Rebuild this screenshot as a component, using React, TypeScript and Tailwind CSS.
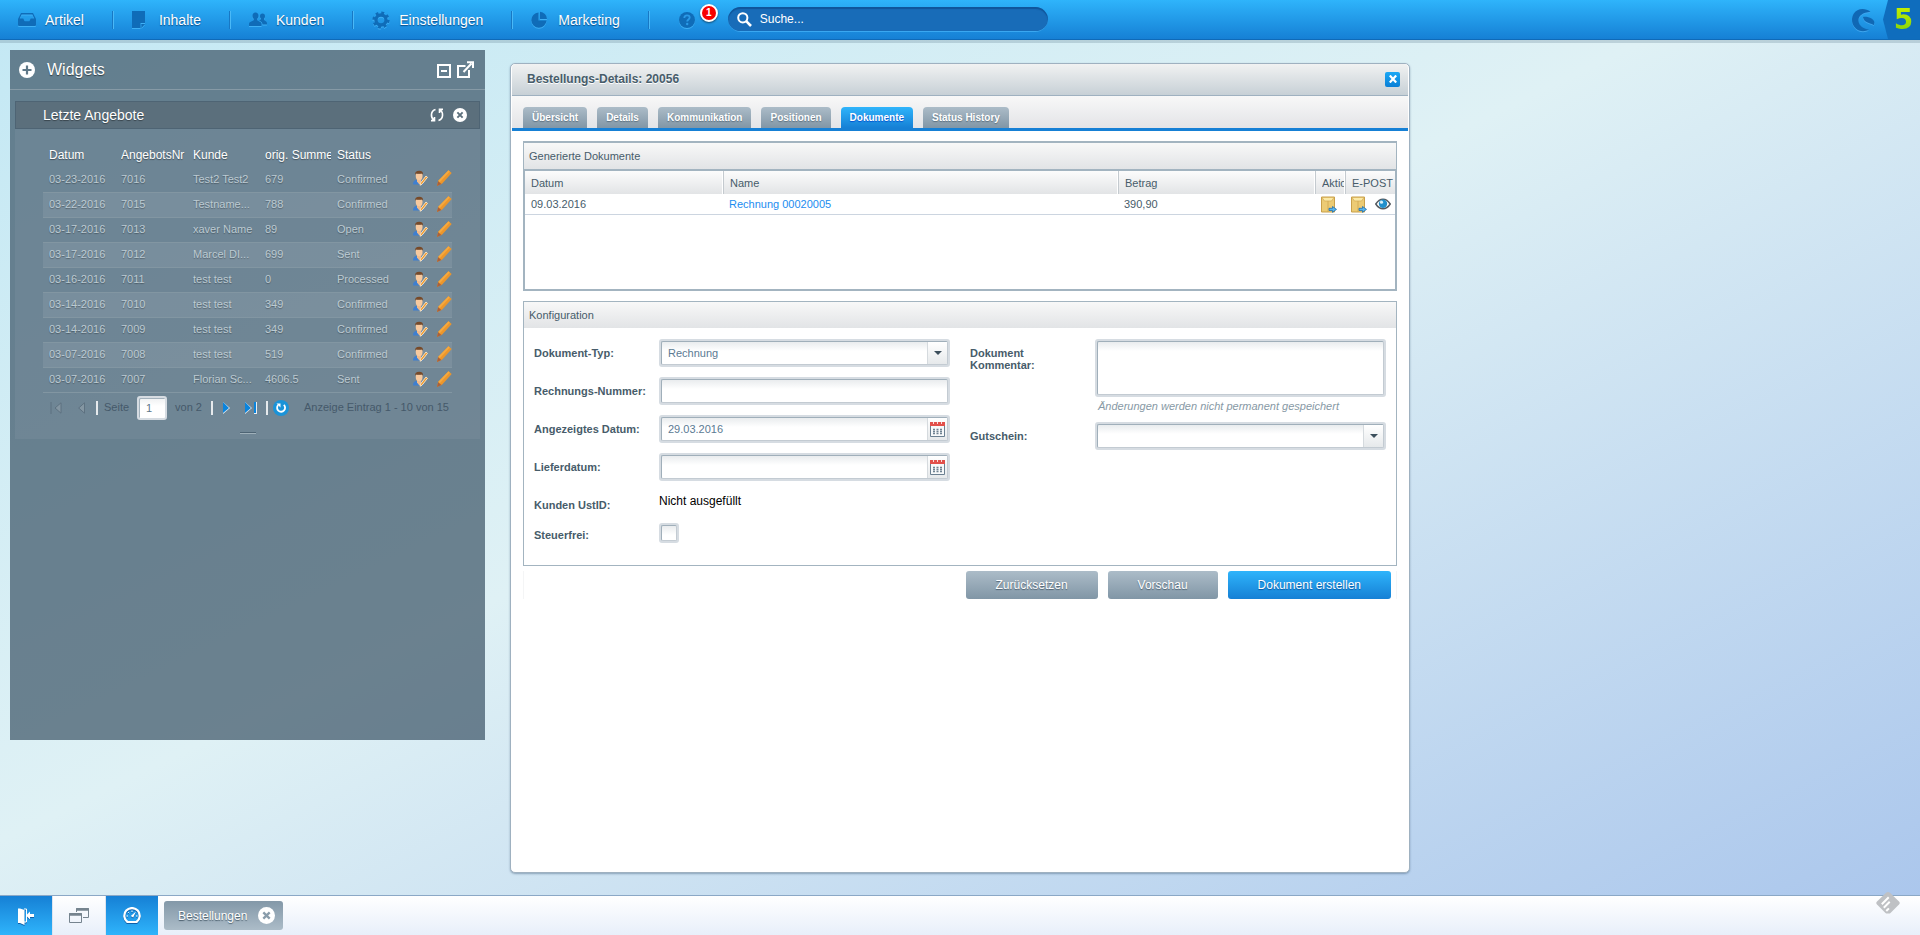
import React from "react";

type Offer = [string, string, string, string, string];

const offers: Offer[] = [
  ["03-23-2016", "7016", "Test2 Test2", "679", "Confirmed"],
  ["03-22-2016", "7015", "Testname...", "788", "Confirmed"],
  ["03-17-2016", "7013", "xaver Name", "89", "Open"],
  ["03-17-2016", "7012", "Marcel DI...", "699", "Sent"],
  ["03-16-2016", "7011", "test test", "0", "Processed"],
  ["03-14-2016", "7010", "test test", "349", "Confirmed"],
  ["03-14-2016", "7009", "test test", "349", "Confirmed"],
  ["03-07-2016", "7008", "test test", "519", "Confirmed"],
  ["03-07-2016", "7007", "Florian Sc...", "4606.5", "Sent"],
];

/* ---------- icons ---------- */

const navIcon = "h-[18px] w-[18px] shrink-0 text-[#0f6cb8] drop-shadow-[0_1px_0_#3fb0f5]";

const TrayIcon = () => (
  <svg viewBox="0 0 18 18" className={navIcon} fill="currentColor">
    <path d="M3 2h12l3 6v6a1 1 0 0 1-1 1H1a1 1 0 0 1-1-1V8zM3.6 3.4 1.8 7.6h3.4c.6 0 .7 2.6 1.6 2.6h4.4c.9 0 1-2.6 1.6-2.6h3.4l-1.8-4.2z" />
  </svg>
);
const NoteIcon = () => (
  <svg viewBox="0 0 18 18" className={navIcon} fill="currentColor">
    <path d="M0 0h13v12H8.500v5H0zM9.500 13H13l-3.500 4z" />
  </svg>
);
const PeopleIcon = () => (
  <svg viewBox="0 0 18 18" className={navIcon} fill="currentColor">
    <path d="M6.500 1.500c1.900 0 3 1.300 3 3.200 0 1.300-.5 2.500-1.300 3.100v1.500c1 .9 4.300 1.600 4.300 3.700v2H0v-2c0-2.100 3.600-2.800 4.700-3.700V7.800C3.900 7.200 3.500 6 3.500 4.700c0-1.900 1.100-3.200 3-3.200z" />
    <path d="M13.500 2.500c1.600 0 2.500 1.100 2.500 2.700 0 1-.4 2-1 2.500V9c.7.800 3 1.400 3 3v1.500h-4.400c-.1-2-2-3.100-3.400-4 .9-.3 1.800-.9 1.800-1.800-.6-.5-1-1.500-1-2.500 0-1.600.9-2.700 2.500-2.700z" />
  </svg>
);
const GearIcon = () => (
  <svg viewBox="0 0 18 18" className={navIcon} fill="none" stroke="currentColor">
    <circle cx="9" cy="9" r="5" strokeWidth="3.400" />
    <circle cx="9" cy="9" r="7.300" strokeWidth="2.600" strokeDasharray="2.87 2.87" />
  </svg>
);
const PieIcon = () => (
  <svg viewBox="0 0 18 18" className={navIcon} fill="currentColor">
    <path d="M7.500 1.500v8h8a7.600 7.600 0 1 1-8-8z" />
    <path d="M9 .8A7.500 7.500 0 0 1 16 8H9z" />
  </svg>
);
const HelpIcon = () => (
  <svg viewBox="0 0 18 18" className={navIcon}>
    <circle cx="9" cy="9" r="8" fill="currentColor" />
    <path d="M6.300 7c0-1.700 1.100-2.700 2.700-2.700s2.700.9 2.700 2.300c0 1.900-2.500 2-2.500 4" fill="none" stroke="#2a9ae8" strokeWidth="1.800" />
    <circle cx="9.200" cy="13" r="1.200" fill="#2a9ae8" />
  </svg>
);
const SwirlIcon = () => (
  <svg viewBox="0 0 24 24" className="h-6 w-6 text-[#1068b4] drop-shadow-[0_1px_0_#3fa6ee]" fill="currentColor">
    <path d="M19.500 3.800C14-.5 6 .2 2.500 6-1 12.500 2 20 8 22.500c3.500 1.300 7 .8 10-1C12 21 8 17.500 7.500 13 7 8.500 11 4.500 19.500 3.800z" />
    <path d="M12 9c3-.8 10.500 1 11.300 5 .1 1.300-.2 2.500-.6 3.200C20 14.500 13 15.500 12 9z" />
  </svg>
);
const CustomerIcon = () => (
  <svg viewBox="0 0 16 16" className="h-4 w-4">
    <path d="M1 14.500c0-3 1.300-4.500 3.500-4.500h4c2 0 3 1.500 3 4.500z" fill="#3f7fd0" />
    <path d="M5 8.500h4.200v3L8.500 14H7l-2-2.500z" fill="#f0ba8a" />
    <path d="M3.800 3.500h6.700v3.200c0 2.300-1.500 3.600-3.300 3.600S3.800 9 3.800 6.700z" fill="#f8c99e" />
    <path d="M3 5C2.800 2 4.500.8 7.200.8s4.200 1.300 3.900 4.200l-1-1.500c-2 .4-4.200.4-6.200 0z" fill="#774a29" />
    <path d="m14 6 1.500 1.300-5.500 7-2 .9.500-2.200z" fill="#f09a2c" stroke="#fbe9cf" strokeWidth=".9" />
  </svg>
);
const PencilIcon = () => (
  <svg viewBox="0 0 16 16" className="h-4 w-4">
    <path d="M12.500.3 15.700 3 6 13.800 1 16l1.300-5.300z" fill="#ec962b" />
    <path d="m12.500.3 1.300 1.100-10 10.800-1.500-1.500z" fill="#f5a93f" />
    <path d="M2.100 11.300 5.500 14 1 16z" fill="#a9603c" />
  </svg>
);
const EnvelopeIcon = () => (
  <svg viewBox="0 0 16 17" className="h-[17px] w-4">
    <path d="M.5 1h13v15H.5z" fill="#eccb74" stroke="#c9a04a" />
    <path d="M1 1.500h12L10.500 5h-7z" fill="#fbe9a5" stroke="#d3ab55" strokeWidth=".7" />
    <path d="M7 5v11" stroke="#cfa651" strokeWidth=".8" />
    <path d="M8 12.300h3.500v-1.800l4 2.900-4 2.900v-1.800H8z" fill="#58b6ee" stroke="#1c6fb0" strokeWidth=".8" />
  </svg>
);
const EyeIcon = () => (
  <svg viewBox="0 0 16 12" className="h-3 w-4">
    <path d="M.8 6C3 2.500 5.300 1.200 8 1.200S13 2.500 15.200 6C13 9.500 10.700 10.800 8 10.800S3 9.500.8 6z" fill="#fff" stroke="#555b60" strokeWidth="1.500" />
    <circle cx="8" cy="5.700" r="4.200" fill="#2090cc" />
    <circle cx="6.500" cy="4.200" r="1.600" fill="#d6f0fb" />
  </svg>
);
const CalendarIcon = () => (
  <svg viewBox="0 0 15 15" className="h-[15px] w-[15px]">
    <path d="M0 0h15v4H0z" fill="#e2504b" />
    <path d="M3.500 0v2M7.500 0v2M11.500 0v2" stroke="#fbdcdb" />
    <path d="M.5 4v10.500h14V4" fill="#f7f9fa" stroke="#6b8091" />
    <path d="M3 7.500h9M3 9.500h9M3 11.500h9" stroke="#6f8291" strokeWidth="1.300" strokeDasharray="2 1.500" />
  </svg>
);
const CircleX = ({ className, cross }: { className: string; cross: string }) => (
  <svg viewBox="0 0 16 16" className={className}>
    <circle cx="8" cy="8" r="8" fill="#fff" />
    <path d="m5 5 6 6M11 5l-6 6" stroke={cross} strokeWidth="2.200" />
  </svg>
);

/* ---------- top bar ---------- */

const menu = [
  { label: "Artikel", icon: <TrayIcon /> },
  { label: "Inhalte", icon: <NoteIcon /> },
  { label: "Kunden", icon: <PeopleIcon /> },
  { label: "Einstellungen", icon: <GearIcon /> },
  { label: "Marketing", icon: <PieIcon /> },
];

function TopBar() {
  return (
    <header className="flex h-10 shrink-0 items-center border-b border-[#0f6ab8] bg-linear-to-b from-[#2fb4fb] to-[#1680d5] shadow-[0_3px_0_rgba(110,140,155,0.3)]">
      <nav className="flex items-center">
        {menu.map((m) => (
          <div key={m.label} className="flex items-center">
            <button type="button" className="flex items-center gap-[9px] pr-7 pl-[18px] text-[14px] leading-[18px] text-white [text-shadow:0_1px_1px_rgba(0,50,100,0.7)]">
              {m.icon}
              {m.label}
            </button>
            <span className="h-[18px] w-[2px] border-r border-l border-r-[#4ab9f7] border-l-[#1878c4]" />
          </div>
        ))}
      </nav>
      <button type="button" aria-label="Hilfe" className="relative ml-7">
        <HelpIcon />
        <span className="absolute -top-[7px] left-[22px] flex h-[18px] w-[18px] items-center justify-center rounded-full border-2 border-white bg-[#f80000] text-[10px] font-bold text-white shadow-[0_1px_2px_rgba(0,0,0,0.5)]">
          1
        </span>
      </button>
      <div className="ml-8 flex h-[25px] w-80 items-center gap-2 rounded-full border-b border-[#3aa7f0] bg-[#186cb8] pl-[9px] shadow-[inset_0_2px_1px_rgba(10,70,135,0.6)]">
        <svg viewBox="0 0 15 15" className="h-[15px] w-[15px] shrink-0" fill="none" stroke="#fff">
          <circle cx="5.800" cy="5.800" r="4.600" strokeWidth="2" />
          <path d="m9.200 9.200 4.800 4.800" strokeWidth="2.600" />
        </svg>
        <input aria-label="Suche" placeholder="Suche..." className="min-w-0 flex-1 bg-transparent text-[12px] text-white outline-none placeholder:text-white" />
      </div>
      <div className="ml-auto flex items-center self-stretch">
        <SwirlIcon />
        <div className="ml-2 flex h-full w-[37px] items-center justify-center bg-[#0f6dbd] pl-1 [clip-path:polygon(5px_0,100%_0,100%_100%,5px_100%,0_50%)]">
          <span className="bg-linear-to-b from-[#c6f000] to-[#7fd00a] bg-clip-text font-['DejaVu_Sans',sans-serif] text-[28px] leading-none font-bold text-transparent">5</span>
        </div>
      </div>
    </header>
  );
}

/* ---------- widgets ---------- */

const pagerLine = "h-[14px] w-[2px] bg-[#e6eaed]";

function Widgets() {
  return (
    <aside className="flex min-h-[690px] w-[475px] shrink-0 flex-col self-start bg-[rgba(57,81,100,0.7)]">
      <div className="flex h-10 items-center border-b border-[#869aa6] pr-[11px] pl-[9px] text-white">
        <button type="button" aria-label="Widget hinzufügen">
          <svg viewBox="0 0 16 16" className="h-4 w-4">
            <circle cx="8" cy="8" r="8" fill="#fff" />
            <path d="M8 3.500v9M3.500 8h9" stroke="#5f7888" strokeWidth="2.200" />
          </svg>
        </button>
        <h2 className="ml-3 flex-1 text-[16px] leading-5 [text-shadow:0_1px_1px_rgba(0,0,0,0.5)]">Widgets</h2>
        <button type="button" aria-label="Minimieren" className="mt-[2px]">
          <svg viewBox="0 0 14 14" className="h-[14px] w-[14px]" fill="none" stroke="#fff" strokeWidth="2">
            <path d="M1 1h12v12H1zM4 7h6" />
          </svg>
        </button>
        <button type="button" aria-label="Abdocken" className="ml-[6px]">
          <svg viewBox="0 0 17 17" className="h-[17px] w-[17px]" fill="none" stroke="#fff" strokeWidth="2">
            <path d="M8.500 5H1v11h11V9" />
            <path d="m6.500 11 8-8.500M10 1.200h6V7" />
          </svg>
        </button>
      </div>
      <section className="mx-[5px] mt-[11px] bg-white/5">
        <div className="flex h-7 items-center border border-[#4e6474] bg-[#5b6f7c] pr-3 pl-[27px] text-white">
          <h3 className="flex-1 text-[14px] leading-5 [text-shadow:0_1px_1px_rgba(0,0,0,0.4)]">Letzte Angebote</h3>
          <button type="button" aria-label="Aktualisieren">
            <svg viewBox="0 0 14 14" className="h-[14px] w-[14px]" fill="none" stroke="#fff" strokeWidth="1.600">
              <path d="M5.500 1.500C.5 3 .3 9.500 4 12.200M1 12.600h3.500V9M8.500 12.500c5-1.500 5.200-8 1.500-10.700M13 1.400H9.500V5" />
            </svg>
          </button>
          <button type="button" aria-label="Schließen" className="ml-[9px]">
            <CircleX className="h-[14px] w-[14px]" cross="#5b6f7c" />
          </button>
        </div>
        <div className="px-7 pt-[13px]">
          <table className="w-full table-fixed border-collapse text-left">
            <colgroup>
              <col className="w-[72px]" />
              <col className="w-[72px]" />
              <col className="w-[72px]" />
              <col className="w-[72px]" />
              <col className="w-[72px]" />
              <col />
            </colgroup>
            <thead>
              <tr className="h-[25px] text-[12px] text-white [text-shadow:0_1px_1px_rgba(0,0,0,0.4)]">
                {["Datum", "AngebotsNr", "Kunde", "orig. Summe", "Status"].map((h) => (
                  <th key={h} className="p-0 pl-[6px] font-normal">
                    <div className="overflow-hidden whitespace-nowrap">{h}</div>
                  </th>
                ))}
                <th />
              </tr>
            </thead>
            <tbody>
              {offers.map((o, i) => (
                <tr key={i} className="h-[25px] border-b border-[#8296a2] text-[11px] text-[#bccad2] [text-shadow:0_1px_1px_rgba(0,0,0,0.3)] even:bg-white/8">
                  {o.map((c, j) => (
                    <td key={j} className="overflow-hidden p-0 pl-[6px] whitespace-nowrap">{c}</td>
                  ))}
                  <td className="p-0 pb-[2px]">
                    <div className="flex items-center justify-end gap-2">
                      <button type="button" aria-label="Kunde öffnen"><CustomerIcon /></button>
                      <button type="button" aria-label="Bearbeiten"><PencilIcon /></button>
                    </div>
                  </td>
                </tr>
              ))}
            </tbody>
          </table>
          <div className="flex h-[30px] items-center text-[11px] text-[#45596a]">
            <button type="button" aria-label="Erste Seite" className="flex w-[26px] justify-center">
              <svg viewBox="0 0 12 12" className="h-3 w-3" fill="#8496a2" stroke="#5d7180"><path d="M1 0v12M11 .8v10.400L5 6z" /></svg>
            </button>
            <button type="button" aria-label="Vorherige Seite" className="flex w-6 justify-center">
              <svg viewBox="0 0 7 12" className="h-3 w-[7px]" fill="#8496a2" stroke="#5d7180"><path d="M6.500.8v10.400L.7 6z" /></svg>
            </button>
            <span className={`${pagerLine} ml-[3px]`} />
            <label htmlFor="page" className="ml-[6px]">Seite</label>
            <input id="page" defaultValue="1" className="mx-2 h-6 w-[30px] rounded-[3px] border-2 border-[#d6dce2] bg-linear-to-b from-[#eef0f1] to-white to-40% pl-[7px] text-[11px] text-[#5d7688] shadow-[inset_1px_1px_0_#a3b1bc] outline-none" />
            <span>von 2</span>
            <span className={`${pagerLine} ml-[9px]`} />
            <button type="button" aria-label="Nächste Seite" className="flex w-[26px] justify-center">
              <svg viewBox="0 0 7 12" className="h-3 w-[7px]"><path d="M0 0v12l7-6z" fill="#e9eef2" /><path d="M0 0v11l6-5z" fill="#0b84dc" /></svg>
            </button>
            <button type="button" aria-label="Letzte Seite" className="flex w-6 justify-center">
              <svg viewBox="0 0 12 12" className="h-3 w-3"><path d="M0 0v12l7-6zM9 0h3v12H9z" fill="#e9eef2" /><path d="M0 0v11l6-5zM9 0h2v11H9z" fill="#0b84dc" /></svg>
            </button>
            <span className={`${pagerLine} ml-[3px]`} />
            <button type="button" aria-label="Neu laden" className="ml-[5px]">
              <svg viewBox="0 0 16 16" className="h-4 w-4">
                <circle cx="8" cy="8" r="8" fill="#1a93d8" />
                <path d="M10.800 4.800A4 4 0 1 1 5.200 5" fill="none" stroke="#fff" strokeWidth="1.800" />
                <path d="M3.500 3.500h4v4z" fill="#fff" />
              </svg>
            </button>
            <span className="ml-[15px] whitespace-nowrap">Anzeige Eintrag 1 - 10 von 15</span>
          </div>
          <div className="flex h-4 items-center justify-center pt-1">
            <span className="h-[2px] w-4 border-t border-b border-t-[#4e6474] border-b-[#9fb0ba]" />
          </div>
        </div>
      </section>
    </aside>
  );
}

/* ---------- order window ---------- */

const frame = "flex rounded-[3px] bg-[#d6dce2] p-[2px]";
const well =
  "rounded-[2px] border border-[#c3cbd2] border-t-[#a0afba] border-l-[#a0afba] bg-[linear-gradient(to_bottom,#e9ecee,#ffffff_9px)]";
const fieldText = "min-w-0 flex-1 bg-transparent pl-[6px] text-[11px] text-[#5b7a93] outline-none";

function Row({ id, label, children }: { id: string; label: React.ReactNode; children: React.ReactNode }) {
  return (
    <div className="flex">
      <label htmlFor={id} className="w-[125px] shrink-0 pt-2 text-[11px] leading-3 font-bold text-[#475c6a]">
        {label}
      </label>
      {children}
    </div>
  );
}

function SelectField({ id, value }: { id: string; value: string }) {
  return (
    <div className={`${frame} h-7 flex-1`}>
      <div className={`${well} relative flex flex-1`}>
        <select id={id} defaultValue={value} className={`${fieldText} appearance-none`}>
          <option>{value}</option>
        </select>
        <span className="pointer-events-none absolute inset-y-0 right-0 flex w-5 items-center justify-center border-l border-[#d5dade] bg-linear-to-b from-white to-[#e6e9eb]">
          <svg viewBox="0 0 8 4" className="h-1 w-2" fill="#3c4f5c"><path d="M0 0h8L4 4z" /></svg>
        </span>
      </div>
    </div>
  );
}

function DateField({ id, value }: { id: string; value: string }) {
  return (
    <div className={`${frame} h-7 flex-1`}>
      <div className={`${well} flex flex-1`}>
        <input id={id} defaultValue={value} className={fieldText} />
        <button type="button" aria-label="Kalender" className="flex w-5 items-center justify-center border-l border-[#d5dade] bg-linear-to-b from-white to-[#e6e9eb]">
          <CalendarIcon />
        </button>
      </div>
    </div>
  );
}

const tabs = ["Übersicht", "Details", "Kommunikation", "Positionen", "Dokumente", "Status History"];
const grey = "bg-linear-to-b from-[#acbcc8] to-[#8196a6]";
const blue = "bg-linear-to-b from-[#2fb4fb] to-[#1680d5]";
const panelHead = "bg-linear-to-b from-[#f8f8f8] to-[#e2e4e6] pl-[5px] text-[11px] leading-[26px] text-[#475c6a]";
const headCell = "border-r border-l border-r-white border-l-[#c4cacf] p-0 pt-px pl-[6px] font-normal first:border-l-0 last:border-r-0";
const action = "h-7 rounded-[3px] px-[30px] text-[12px] text-white";

function OrderWindow() {
  return (
    <section className="mt-[13px] mb-3 flex w-[900px] flex-col rounded-[5px] border border-[#9fb1c0] bg-white px-px shadow-[0_1px_2px_rgba(70,100,130,0.5)]">
      <div className="flex h-8 shrink-0 items-center justify-between rounded-t-[4px] border-b border-[#9fb1c0] bg-linear-to-b from-[#f1f2f2] to-[#c7d0d6] pr-2 pb-px pl-[15px]">
        <h1 className="text-[12px] leading-4 font-bold text-[#475c6a] [text-shadow:0_1px_0_#fff]">Bestellungs-Details: 20056</h1>
        <button type="button" aria-label="Fenster schließen" className="flex h-[15px] w-[15px] items-center justify-center rounded-[2px] bg-linear-to-b from-[#1ba8f5] to-[#0a7fd6]">
          <svg viewBox="0 0 8 8" className="h-2 w-2" stroke="#fff" strokeWidth="2.200"><path d="m.8.500 6.400 7M7.200.500l-6.400 7" /></svg>
        </button>
      </div>
      <div role="tablist" className="flex h-[35px] shrink-0 items-end gap-[10px] border-b-3 border-[#1680d5] bg-linear-to-b from-[#f8f8f8] to-[#e3e4e7] pl-[11px]">
        {tabs.map((t) => (
          <button
            key={t}
            type="button"
            role="tab"
            aria-selected={t === "Dokumente"}
            className={`h-[21px] rounded-t-[4px] px-[9px] text-[10px] leading-[22px] font-bold text-white ${t === "Dokumente" ? `${blue} [text-shadow:0_1px_1px_#0050d0]` : `${grey} [text-shadow:0_1px_1px_rgba(60,80,95,0.6)]`}`}
          >
            {t}
          </button>
        ))}
      </div>
      <div className="px-[11px] pt-[10px]">
        <div className="border-t-2 border-[#a3b4c0]">
          <h2 className={`${panelHead} border-x border-[#a3b4c0]`}>Generierte Dokumente</h2>
          <div className="h-[122px] border-2 border-[#a3b4c0] bg-white">
            <table className="w-full table-fixed border-separate border-spacing-0 text-left text-[11px] text-[#475c6a]">
              <colgroup>
                <col className="w-[198px]" />
                <col />
                <col className="w-[197px]" />
                <col className="w-[30px]" />
                <col className="w-[50px]" />
              </colgroup>
              <thead>
                <tr className="h-[23px] bg-linear-to-b from-[#fcfcfc] to-[#e2e4e6]">
                  {["Datum", "Name", "Betrag", "Aktionen", "E-POST"].map((h) => (
                    <th key={h} className={headCell}>
                      <div className="overflow-hidden whitespace-nowrap">{h}</div>
                    </th>
                  ))}
                </tr>
              </thead>
              <tbody>
                <tr className="h-[21px] [&>td]:border-b [&>td]:border-[#ccd5e0] [&>td]:p-0 [&>td]:pl-[6px]">
                  <td>09.03.2016</td>
                  <td><a href="#rechnung" className="text-[#1b8df0]">Rechnung 00020005</a></td>
                  <td>390,90</td>
                  <td><button type="button" aria-label="Senden" className="block"><EnvelopeIcon /></button></td>
                  <td>
                    <div className="flex items-center gap-2">
                      <button type="button" aria-label="Per E-POST senden"><EnvelopeIcon /></button>
                      <button type="button" aria-label="Ansehen"><EyeIcon /></button>
                    </div>
                  </td>
                </tr>
              </tbody>
            </table>
          </div>
        </div>

        <form className="mt-[10px] border border-[#a3b4c0] bg-white">
          <h2 className={`${panelHead} mb-px`}>Konfiguration</h2>
          <div className="grid grid-cols-2 gap-5 px-[10px] pt-[10px] pb-[22px]">
            <div className="flex flex-col gap-[10px]">
              <Row id="typ" label="Dokument-Typ:"><SelectField id="typ" value="Rechnung" /></Row>
              <Row id="nummer" label="Rechnungs-Nummer:">
                <div className={`${frame} h-7 flex-1`}>
                  <div className={`${well} flex flex-1`}><input id="nummer" className={fieldText} /></div>
                </div>
              </Row>
              <Row id="datum" label="Angezeigtes Datum:"><DateField id="datum" value="29.03.2016" /></Row>
              <Row id="liefer" label="Lieferdatum:"><DateField id="liefer" value="" /></Row>
              <Row id="ust" label="Kunden UstID:">
                <output id="ust" className="mb-[2px] text-[12px] leading-5 text-black">Nicht ausgefüllt</output>
              </Row>
              <div className="flex items-center">
                <label htmlFor="frei" className="w-[125px] pt-[3px] text-[11px] leading-3 font-bold text-[#475c6a]">Steuerfrei:</label>
                <span className={frame}>
                  <input id="frei" type="checkbox" className={`${well} h-4 w-4 appearance-none`} />
                </span>
              </div>
            </div>
            <div className="flex flex-col gap-2">
              <Row id="kommentar" label={<>Dokument<br />Kommentar:</>}>
                <div className="flex-1">
                  <div className={`${frame} h-[58px]`}>
                    <textarea id="kommentar" className={`${well} flex-1 resize-none outline-none`} />
                  </div>
                  <p className="mt-px pl-[3px] text-[11px] leading-4 text-[#8799a5] italic">Änderungen werden nicht permanent gespeichert</p>
                </div>
              </Row>
              <Row id="gutschein" label="Gutschein:"><SelectField id="gutschein" value="" /></Row>
            </div>
          </div>
        </form>

        <div className="mt-[5px] flex justify-end gap-[10px] border-x border-[#f4f5f6] pr-[5px]">
          <button type="button" className={`${grey} ${action} [text-shadow:0_1px_1px_rgba(50,70,85,0.7)]`}>Zurücksetzen</button>
          <button type="button" className={`${grey} ${action} [text-shadow:0_1px_1px_rgba(50,70,85,0.7)]`}>Vorschau</button>
          <button type="button" className={`${blue} ${action} [text-shadow:0_1px_1px_rgba(0,60,130,0.7)]`}>Dokument erstellen</button>
        </div>
      </div>
    </section>
  );
}

/* ---------- task bar ---------- */

function TaskBar() {
  const active = "flex w-[52px] items-center justify-center bg-linear-to-b from-[#1680d5] to-[#2fb4fb]";
  return (
    <footer className="relative flex h-10 shrink-0 border-t border-[#8ba8c6] bg-linear-to-b from-white to-[#e8effa]">
      <button type="button" aria-label="Abmelden" className={active}>
        <svg viewBox="0 0 16 18" className="h-[18px] w-4 drop-shadow-[0_1px_0_#0f5fa8]">
          <path d="M6 2h2.500v13H6" fill="none" stroke="#fff" />
          <path d="M0 1.500h2L6.500 3v15L2 16H0zM8 8.500 12 4.500v2.500h4v3h-4v2.500z" fill="#fff" />
        </svg>
      </button>
      <button type="button" aria-label="Fenster" className="flex w-[54px] items-center justify-center border-x border-[#dde4ee]">
        <svg viewBox="0 0 20 15" className="h-[15px] w-5" fill="none" stroke="#76848f">
          <path d="M7.500 4V.5h12v9H14M.5 5.500h12v9H.5z" />
          <path d="M7 1.500h13M0 6.500h13" strokeWidth="2.500" />
        </svg>
      </button>
      <button type="button" aria-label="Übersicht" className={active}>
        <svg viewBox="0 0 18 17" className="h-[17px] w-[18px] drop-shadow-[0_1px_0_#0f5fa8]" fill="none" stroke="#fff">
          <path d="M4.500 15A7.700 7.700 0 1 1 13.500 15z" strokeWidth="2.200" strokeLinejoin="round" />
          <path d="M3.500 9h1.500M5.200 5.200l1 1M9 3.500V5M13 9h1.500" strokeWidth="1" />
          <path d="M13 4.500 10.200 10.500 7.800 9z" fill="#fff" stroke="none" />
        </svg>
      </button>
      <button type="button" className="mt-[5px] ml-[6px] flex h-[29px] items-center gap-[11px] rounded-[3px] bg-linear-to-b from-[#8398a8] to-[#acbcc8] pr-2 pl-[14px] text-[12px] text-white [text-shadow:0_1px_1px_rgba(50,70,85,0.8)]">
        Bestellungen
        <CircleX className="h-[17px] w-[17px]" cross="#8a9dab" />
      </button>
      <svg viewBox="0 0 24 22" className="absolute -top-1 right-5 h-[22px] w-6">
        <path d="M10 .800Q12-.6 14 .8L23 9.500Q24.500 11 23 12.500L14.500 21Q13.800 21.600 13 21.600H11Q10.200 21.600 9.500 21L1 12.500Q-.5 11 1 9.500z" fill="#bfc1c4" />
        <path d="m6.500 11.500 5.500-5.500M8.500 15l4.500-4.500M11 18.300l1.200-1.200" stroke="#fff" strokeWidth="2" strokeLinecap="square" />
      </svg>
    </footer>
  );
}

export default function App() {
  return (
    <div className="flex min-h-screen flex-col bg-[linear-gradient(to_bottom_right,#c3e8f4_0%,#dff1f5_45%,#a9c5ec_100%)] font-['Liberation_Sans',Arial,sans-serif]">
      <TopBar />
      <main className="flex flex-1 items-stretch gap-[25px] p-[10px]">
        <Widgets />
        <OrderWindow />
      </main>
      <TaskBar />
    </div>
  );
}
